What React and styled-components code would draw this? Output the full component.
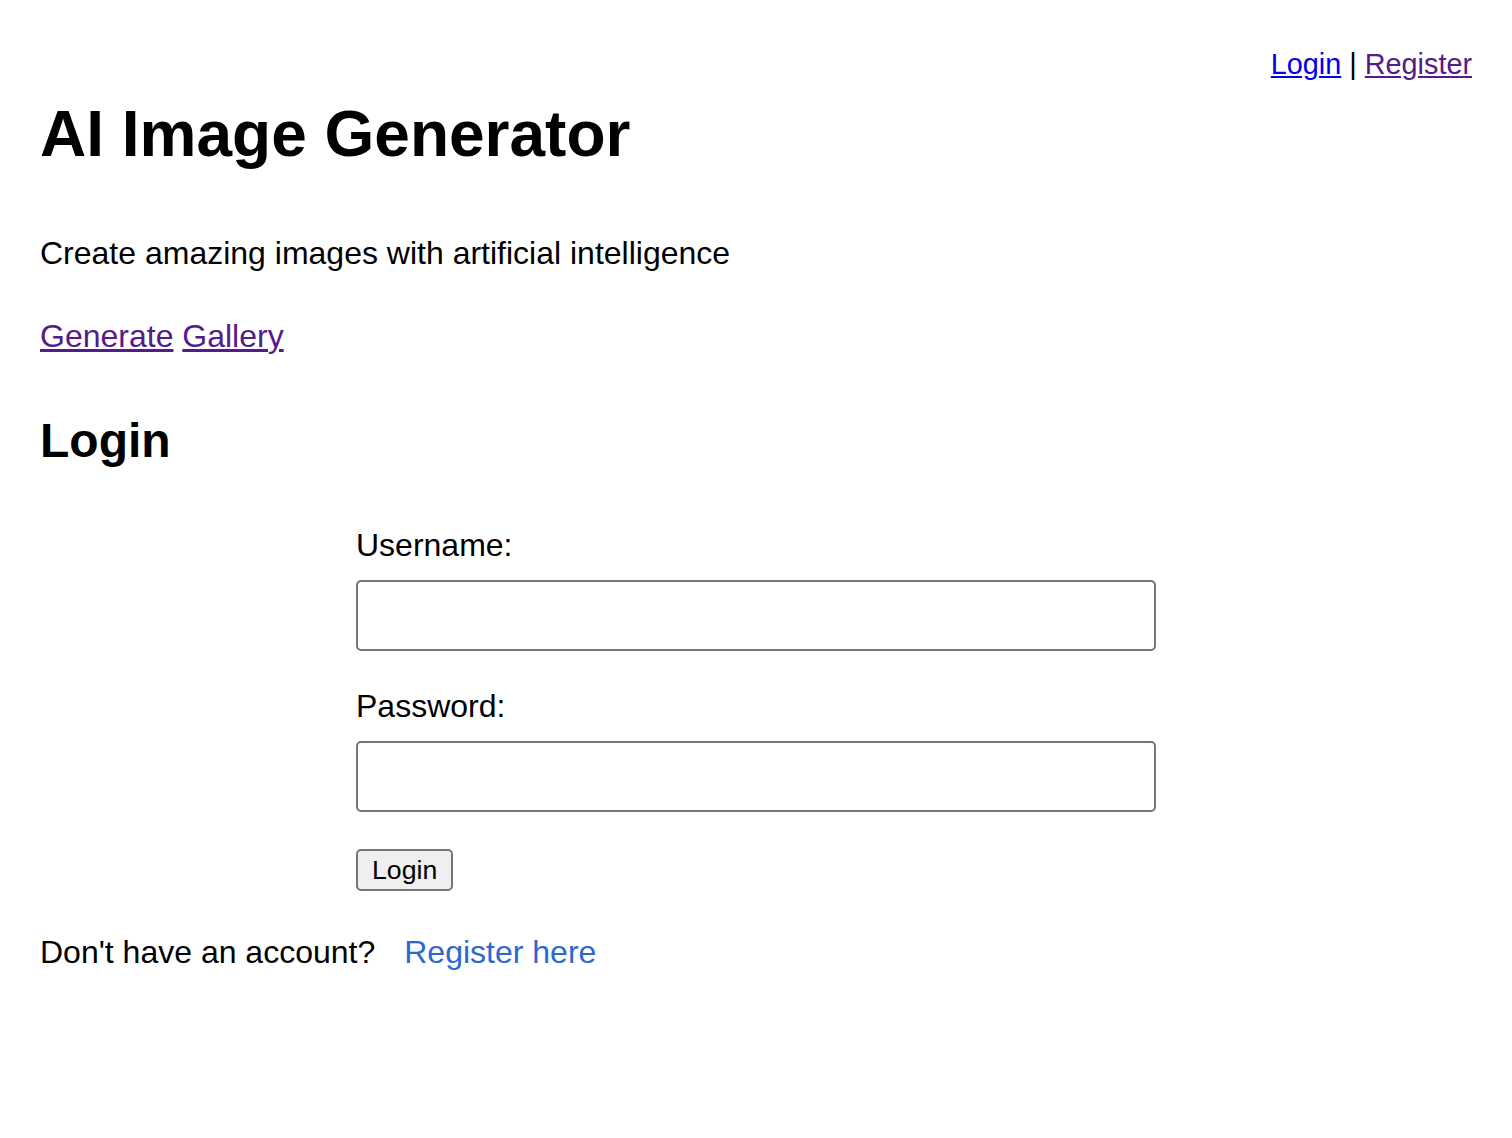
import styled, { createGlobalStyle } from "styled-components";

const GlobalStyle = createGlobalStyle`
  html, body {
    margin: 0;
    padding: 0;
    background: #ffffff;
  }
  body {
    font-family: "Liberation Sans", Arial, sans-serif;
    color: #000000;
  }
`;

const App = () => {
  return (
    <>
      <GlobalStyle />
      <Page>
        <TopNav>
          <NavLink href="#" $visited={false}>Login</NavLink>
          <Sep>|</Sep>
          <NavLink href="#" $visited>Register</NavLink>
        </TopNav>
        <Title>AI Image Generator</Title>
        <Tagline>Create amazing images with artificial intelligence</Tagline>
        <MainNav>
          <MainLink href="#">Generate</MainLink> <MainLink href="#">Gallery</MainLink>
        </MainNav>
        <SectionTitle>Login</SectionTitle>
        <Form onSubmit={(e) => e.preventDefault()}>
          <Field>
            <Label htmlFor="username">Username:</Label>
            <Input id="username" type="text" />
          </Field>
          <Field>
            <Label htmlFor="password">Password:</Label>
            <Input id="password" type="password" />
          </Field>
          <Button type="submit">Login</Button>
        </Form>
        <Footer>
          Don't have an account?
          <RegisterLink href="#">Register here</RegisterLink>
        </Footer>
      </Page>
    </>
  );
};

const Page = styled.div`
  padding: 48px 40px 40px;
`;

const TopNav = styled.div`
  display: flex;
  justify-content: flex-end;
  align-items: baseline;
  font-size: 28.8px;
  line-height: 1.15;
`;

const NavLink = styled.a`
  color: ${(props) => (props.$visited ? "#551a8b" : "#0000ee")};
  text-decoration: underline;
`;

const Sep = styled.span`
  margin: 0 8px;
`;

const Title = styled.h1`
  font-size: 64px;
  font-weight: bold;
  line-height: 1.15;
  margin: 17px 0 0;
`;

const Tagline = styled.p`
  font-size: 32px;
  line-height: 1.15;
  margin: 63px 0 0;
`;

const MainNav = styled.nav`
  font-size: 32px;
  line-height: 1.15;
  margin-top: 46px;
`;

const MainLink = styled.a`
  color: #551a8b;
  text-decoration: underline;
`;

const SectionTitle = styled.h2`
  font-size: 48px;
  font-weight: bold;
  line-height: 1.15;
  margin: 59px 0 0;
`;

const Form = styled.form`
  width: 800px;
  margin: 59px auto 0;
  display: flex;
  flex-direction: column;
  align-items: flex-start;
`;

const Field = styled.div`
  display: flex;
  flex-direction: column;
  width: 100%;
  margin-bottom: 37px;
`;

const Label = styled.label`
  font-size: 32px;
  line-height: 1.15;
  margin-bottom: 16px;
`;

const Input = styled.input`
  box-sizing: border-box;
  width: 100%;
  height: 71px;
  border: 2px solid #767676;
  border-radius: 5px;
  font-size: 28px;
  font-family: inherit;
  padding: 0 12px;
  background: #ffffff;
`;

const Button = styled.button`
  font-family: inherit;
  font-size: 26.67px;
  line-height: 1.15;
  height: 42px;
  padding: 0 14px;
  background: #efefef;
  border: 2px solid #767676;
  border-radius: 5px;
  color: #000000;
`;

const Footer = styled.p`
  font-size: 32px;
  line-height: 1.15;
  margin: 43px 0 0;
`;

const RegisterLink = styled.a`
  color: #2b68d2;
  text-decoration: none;
  margin-left: 29px;
`;

export default App;
